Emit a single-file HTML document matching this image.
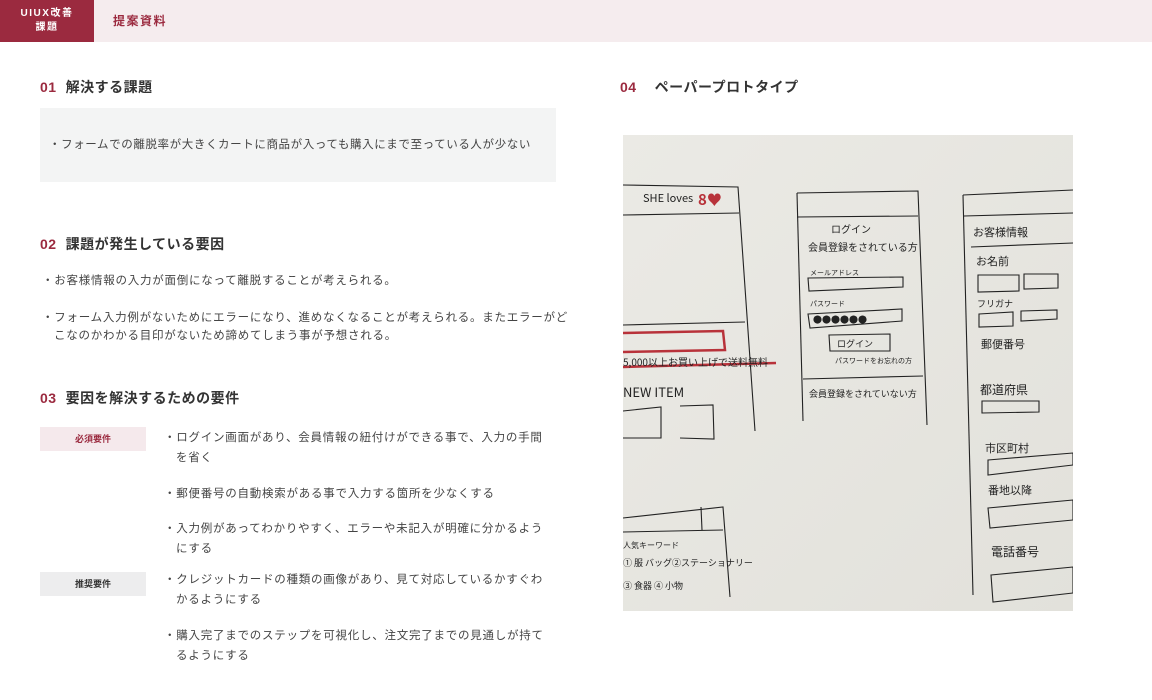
<!DOCTYPE html>
<html><head><meta charset="utf-8"><style>
*{margin:0;padding:0;box-sizing:border-box}
body{width:1152px;height:700px;background:#fff;font-family:"Liberation Sans","Noto Sans CJK JP",sans-serif;color:#333;position:relative;overflow:hidden}
.hdr{position:absolute;left:0;top:0;width:1152px;height:42px;background:#f5ecee}
.badge{position:absolute;left:0;top:0;width:94px;height:42px;background:#9b2a3f;color:#fff;font-size:10px;line-height:14px;text-align:center;padding-top:7px;letter-spacing:1.5px;font-weight:bold}
.ttl{position:absolute;left:113px;top:12px;font-size:12px;color:#9b2a3f;font-weight:bold;letter-spacing:1.5px}
.h{position:absolute;font-size:14px;font-weight:bold;color:#333;letter-spacing:.5px}
.h b{color:#9b2a3f;margin-right:9px}
.t{position:absolute;font-size:11.5px;color:#444;letter-spacing:.75px;line-height:18px}
.box{position:absolute;left:40px;top:108px;width:516px;height:74px;background:#f3f4f4}
.tag{position:absolute;left:40px;width:106px;height:24px;font-size:9px;font-weight:bold;text-align:center;line-height:24px}
.li{position:absolute;left:164px;width:390px;font-size:11.5px;color:#444;letter-spacing:.75px;line-height:20px;padding-left:12px;text-indent:-12px}
</style></head><body>
<div class="hdr"></div>
<div class="badge">UIUX改善<br>課題</div>
<div class="ttl">提案資料</div>

<div class="h" style="left:40px;top:77px"><b>01</b>解決する課題</div>
<div class="box"></div>
<div class="t" style="left:49px;top:136px;letter-spacing:.6px">・フォームでの離脱率が大きくカートに商品が入っても購入にまで至っている人が少ない</div>

<div class="h" style="left:40px;top:234px"><b>02</b>課題が発生している要因</div>
<div class="t" style="left:42px;top:272px">・お客様情報の入力が面倒になって離脱することが考えられる。</div>
<div class="t" style="left:42px;top:309px;width:530px;padding-left:12px;text-indent:-12px">・フォーム入力例がないためにエラーになり、進めなくなることが考えられる。またエラーがどこなのかわかる目印がないため諦めてしまう事が予想される。</div>

<div class="h" style="left:40px;top:388px"><b>03</b>要因を解決するための要件</div>
<div class="tag" style="top:427px;background:#f5e9ec;color:#9b2a3f">必須要件</div>
<div class="tag" style="top:572px;background:#ededee;color:#333">推奨要件</div>
<div class="li" style="top:428px">・ログイン画面があり、会員情報の紐付けができる事で、入力の手間を省く</div>
<div class="li" style="top:484px">・郵便番号の自動検索がある事で入力する箇所を少なくする</div>
<div class="li" style="top:519px">・入力例があってわかりやすく、エラーや未記入が明確に分かるようにする</div>
<div class="li" style="top:570px">・クレジットカードの種類の画像があり、見て対応しているかすぐわかるようにする</div>
<div class="li" style="top:626px">・購入完了までのステップを可視化し、注文完了までの見通しが持てるようにする</div>

<div class="h" style="left:620px;top:77px"><b style="margin-right:18px">04</b>ペーパープロトタイプ</div>

<svg style="position:absolute;left:623px;top:135px" width="450" height="476" viewBox="0 0 450 476">
<defs><linearGradient id="g" x1="0" y1="0" x2="1" y2="1"><stop offset="0" stop-color="#ebeae5"/><stop offset="1" stop-color="#e2e1db"/></linearGradient></defs>
<rect width="450" height="476" fill="url(#g)"/>
<g fill="none" stroke="#222" stroke-width="1.1">
<path d="M0 50 L115 52 L132 296"/><path d="M0 80 L116 78"/><path d="M0 190 L122 187"/>
<path d="M0 276 L38 272 L38 303 L0 303"/><path d="M57 271 L90 270 L91 304 L57 303"/>
<path d="M0 383 L100 372 L107 462"/><path d="M0 397 L100 395"/><path d="M78 372 L79 395"/>
<path d="M174 58 L295 56 L304 290"/><path d="M174 58 L180 286"/><path d="M174 82 L295 81"/><path d="M180 244 L300 241"/>
<path d="M185 143 L280 142 L280 152 L186 156 Z"/><path d="M185 179 L279 174 L279 186 L187 193 Z"/>
<path d="M206 200 L267 199 L267 216 L207 216 Z"/>
<path d="M340 60 L450 55"/><path d="M340 60 L350 460"/><path d="M341 81 L450 78"/><path d="M348 112 L450 108"/>
<path d="M355 140 L396 140 L396 156 L355 157 Z"/><path d="M401 139 L435 139 L435 153 L401 154 Z"/>
<path d="M356 179 L390 177 L390 191 L356 192 Z"/><path d="M398 176 L434 175 L434 184 L398 186 Z"/>
<path d="M359 266 L416 266 L416 277 L359 278 Z"/>
<path d="M365 325 L450 318 L450 330 L365 340 Z"/><path d="M365 373 L450 365 L450 385 L367 393 Z"/>
<path d="M368 440 L450 432 L450 458 L370 467 Z"/>
</g>
<g fill="none" stroke="#b8323a" stroke-width="2.5">
<path d="M0 198 L100 196 L102 215 L0 217"/><path d="M0 232 L153 228"/>
</g>
<g font-family="'Noto Sans CJK JP',sans-serif" fill="#222">
<text x="20" y="67" font-size="11">SHE loves</text><text x="75" y="70" font-size="15" fill="#b8323a" font-weight="bold">8♥</text>
<text x="0" y="231" font-size="10">5,000以上お買い上げで送料無料</text>
<text x="0" y="262" font-size="13">NEW  ITEM</text>
<text x="208" y="98" font-size="10">ログイン</text>
<text x="185" y="116" font-size="10">会員登録をされている方</text>
<text x="187" y="140" font-size="7">メールアドレス</text><text x="187" y="171" font-size="7">パスワード</text>
<text x="190" y="188" font-size="9">●●●●●●</text><text x="214" y="212" font-size="9">ログイン</text>
<text x="212" y="228" font-size="7">パスワードをお忘れの方</text>
<text x="186" y="262" font-size="9">会員登録をされていない方</text>
<text x="350" y="101" font-size="11">お客様情報</text><text x="353" y="130" font-size="11">お名前</text>
<text x="354" y="172" font-size="9">フリガナ</text><text x="358" y="213" font-size="11">郵便番号</text>
<text x="357" y="259" font-size="12">都道府県</text><text x="362" y="317" font-size="11">市区町村</text>
<text x="365" y="359" font-size="11">番地以降</text><text x="368" y="421" font-size="12">電話番号</text>
<text x="0" y="413" font-size="8">人気キーワード</text>
<text x="0" y="431" font-size="9">① 服 バッグ②ステーショナリー</text>
<text x="0" y="454" font-size="9">③ 食器  ④ 小物</text>
</g>
</svg>
</body></html>
